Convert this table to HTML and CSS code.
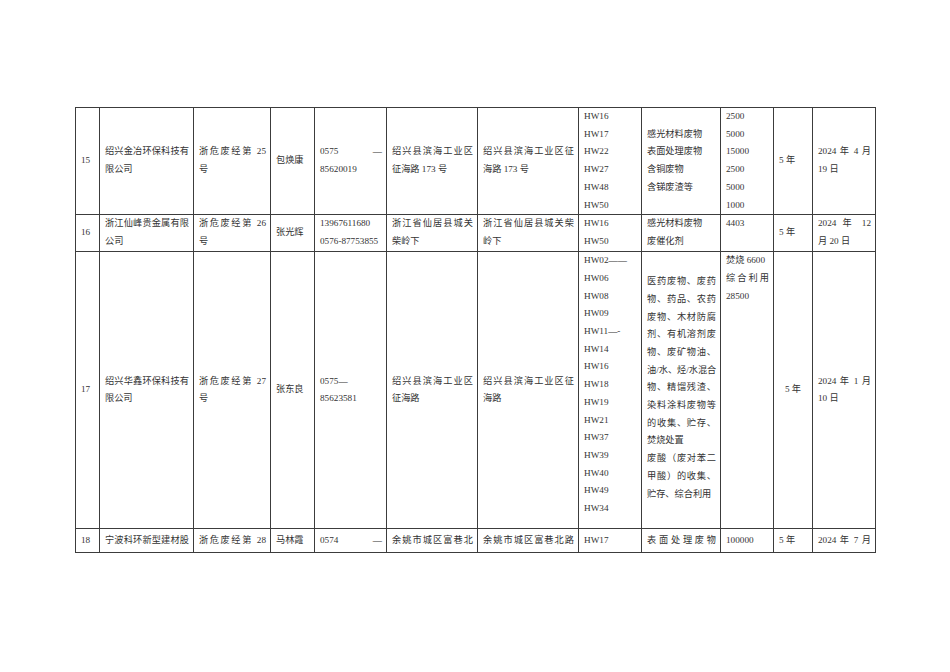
FILE: index.html
```html
<!DOCTYPE html>
<html lang="zh-CN">
<head>
<meta charset="utf-8">
<title>危险废物经营许可证</title>
<link rel="stylesheet" href="styles.css">
</head>
<body>
<div class="page">
<table class="grid">
<colgroup>
<col class="w1"><col class="w2"><col class="w3"><col class="w4"><col class="w5"><col class="w6">
<col class="w7"><col class="w8"><col class="w9"><col class="w10"><col class="w11"><col class="w12">
</colgroup>
<tbody>
<tr class="r15">
<td>15</td>
<td><span class="j">绍兴金冶环保科技有</span>限公司</td>
<td><span class="j">浙危废经第 25</span>号</td>
<td>包焕康</td>
<td><span class="j">0575 —</span>85620019</td>
<td><span class="j">绍兴县滨海工业区</span>征海路 173 号</td>
<td><span class="j">绍兴县滨海工业区征</span>海路 173 号</td>
<td class="t">HW16<br>HW17<br>HW22<br>HW27<br>HW48<br>HW50</td>
<td>感光材料废物<br>表面处理废物<br>含铜废物<br>含锑废渣等</td>
<td class="t">2500<br>5000<br>15000<br>2500<br>5000<br>1000</td>
<td>5 年</td>
<td><span class="j">2024 年 4 月</span>19 日</td>
</tr>
<tr class="r16">
<td>16</td>
<td class="t"><span class="j">浙江仙峰贵金属有限</span>公司</td>
<td class="t"><span class="j">浙危废经第 26</span>号</td>
<td>张光辉</td>
<td class="t">13967611680<br>0576-87753855</td>
<td class="t"><span class="j">浙江省仙居县城关</span>柴岭下</td>
<td class="t"><span class="j">浙江省仙居县城关柴</span>岭下</td>
<td class="t">HW16<br>HW50</td>
<td class="t">感光材料废物<br>废催化剂</td>
<td class="t">4403</td>
<td>5 年</td>
<td class="t"><span class="j">2024 年 12</span>月 20 日</td>
</tr>
<tr class="r17">
<td>17</td>
<td><span class="j">绍兴华鑫环保科技有</span>限公司</td>
<td><span class="j">浙危废经第 27</span>号</td>
<td>张东良</td>
<td>0575—<br>85623581</td>
<td><span class="j">绍兴县滨海工业区</span>征海路</td>
<td><span class="j">绍兴县滨海工业区征</span>海路</td>
<td class="t">HW02——<br>HW06<br>HW08<br>HW09<br>HW11—-<br>HW14<br>HW16<br>HW18<br>HW19<br>HW21<br>HW37<br>HW39<br>HW40<br>HW49<br>HW34</td>
<td class="lift">
<span class="j">医药废物、废药</span>
<span class="j">物、药品、农药</span>
<span class="j">废物、木材防腐</span>
<span class="j">剂、有机溶剂废</span>
<span class="j">物、废矿物油、</span>
<span class="j tight">油/水、烃/水混合</span>
<span class="j">物、精馏残渣、</span>
<span class="j">染料涂料废物等</span>
<span class="j">的收集、贮存、</span>
<span class="l">焚烧处置</span>
<span class="j">废酸（废对苯二</span>
<span class="j">甲酸）的收集、</span>
<span class="l">贮存、综合利用</span>
</td>
<td class="t">焚烧 6600<span class="j">综合利用</span>28500</td>
<td class="c">5 年</td>
<td><span class="j">2024 年 1 月</span>10 日</td>
</tr>
<tr class="r18">
<td>18</td>
<td><span class="j">宁波科环新型建材股</span></td>
<td><span class="j">浙危废经第 28</span></td>
<td>马林霞</td>
<td><span class="j">0574 —</span></td>
<td><span class="j">余姚市城区富巷北</span></td>
<td><span class="j">余姚市城区富巷北路</span></td>
<td>HW17</td>
<td><span class="j">表面处理废物</span></td>
<td>100000</td>
<td>5 年</td>
<td><span class="j">2024 年 7 月</span></td>
</tr>
</tbody>
</table>
</div>
</body>
</html>
```

FILE: styles.css
```css
html, body {
  margin: 0;
  padding: 0;
  background: #ffffff;
}

.page {
  width: 950px;
  height: 672px;
  box-sizing: border-box;
  padding: 107px 0 0 75px;
  overflow: hidden;
}

.grid {
  border-collapse: collapse;
  table-layout: fixed;
  width: 801px;
  font-family: "Liberation Serif", "Noto Sans CJK SC", serif;
  font-size: 9.2px;
  line-height: 17.7px;
  color: #333333;
}

.grid td {
  border: 1px solid #3c3c3c;
  padding: 0 4px 0 5px;
  vertical-align: middle;
  text-align: left;
  white-space: nowrap;
  overflow: hidden;
}

.grid td.t { vertical-align: top; }
.grid td.c { text-align: center; padding: 0; }
.grid td.lift { padding-bottom: 4px; }

.j {
  display: block;
  text-align: justify;
  text-align-last: justify;
  white-space: normal;
}

.j.tight { letter-spacing: -0.3px; }

.l { display: block; }

.w1 { width: 24px; }
.w2 { width: 94px; }
.w3 { width: 77px; }
.w4 { width: 44px; }
.w5 { width: 72px; }
.w6 { width: 91px; }
.w7 { width: 101px; }
.w8 { width: 63px; }
.w9 { width: 79px; }
.w10 { width: 53px; }
.w11 { width: 39px; }
.w12 { width: 63px; }

.r15 { height: 106px; }
.r16 { height: 37px; }
.r17 { height: 277px; }
.r18 { height: 24px; }
```
